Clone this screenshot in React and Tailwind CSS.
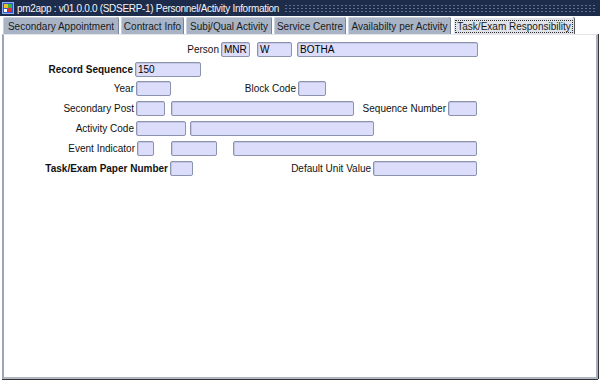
import React from "react";

const font = { fontFamily: '"Liberation Sans", Arial, sans-serif' };

function Field({ w, value, className = "" }) {
  return (
    <div
      className={`h-[15px] shrink-0 rounded-[2px] border border-[#8b93ad] bg-[#dcdcfb] pl-[2px] text-[10px] leading-[13px] text-black shadow-[inset_1px_1px_0_#c4c6e4] ${className}`}
      style={{ width: w }}
    >
      {value}
    </div>
  );
}

function Label({ w, children, bold }) {
  return (
    <div
      className={`shrink-0 pr-[2px] text-right text-[10px] leading-[15px] text-[#111] ${bold ? "font-bold" : ""}`}
      style={{ width: w }}
    >
      {children}
    </div>
  );
}

const tabs = [
  { label: "Secondary Appointment", w: 115 },
  { label: "Contract Info", w: 62 },
  { label: "Subj/Qual Activity", w: 85 },
  { label: "Service Centre", w: 71 },
  { label: "Availabilty per Activity", w: 102 },
  { label: "Task/Exam Responsibility", w: 121, active: true },
];

function AppIcon() {
  return (
    <svg width="12" height="12" viewBox="0 0 12 12" className="shrink-0">
      <rect x="0.5" y="0.5" width="11" height="11" fill="#2a5bc8" stroke="#8fb0f0" />
      <rect x="2" y="2" width="4" height="4" fill="#f0c020" />
      <rect x="6" y="6" width="4" height="4" fill="#e03030" />
      <rect x="6" y="2" width="4" height="4" fill="#40b040" />
      <path d="M2 7h3v3H2z" fill="#ffffff" />
    </svg>
  );
}

export default function App() {
  return (
    <div className="flex h-[380px] w-[600px] flex-col overflow-hidden bg-white" style={font}>
      {/* title bar */}
      <div className="flex h-[16px] items-center bg-[#1d2c4b] pl-[2px] pr-[4px]">
        <AppIcon />
        <span className="ml-[3px] whitespace-nowrap text-[10px] leading-[15px] tracking-[-0.3px] text-[#f2f4f8]">
          pm2app : v01.0.0.0 (SDSERP-1) Personnel/Activity Information
        </span>
        <div className="ml-[5px] h-[9px] flex-1 bg-[radial-gradient(circle,#5f7090_0.6px,transparent_0.8px)] bg-[length:4px_3px]" />
      </div>

      {/* tabs */}
      <div className="flex h-[18px] items-end gap-[3px] pl-[3px] pt-[1px]">
        {tabs.map((t) => (
          <div
            key={t.label}
            className={`flex h-[17px] shrink-0 items-center justify-center whitespace-nowrap rounded-t-[2px] border-l border-t text-[10px] text-[#1a1a1a] ${
              t.active
                ? "border-white bg-[#dfe2e8] shadow-[1px_0_0_#555]"
                : "border-[#c8d0dc] bg-[#a8b4c6] shadow-[1px_0_0_#7a8598]"
            }`}
            style={{ width: t.w }}
          >
            <span className={t.active ? "border border-dotted border-[#333] px-[1px] leading-[11px]" : ""}>
              {t.label}
            </span>
          </div>
        ))}
      </div>

      {/* panel */}
      <div className="mb-[1px] ml-[2px] mr-[2px] flex-1 border-b-2 border-l-2 border-r-2 border-t border-b-[#b0b8c2] border-l-[#9aa3b8] border-r-[#a9b0bc] border-t-[#e4e6ea] pt-[7px] shadow-[0_1px_0_#333,1px_0_0_#333]">
        <div className="flex h-[15px] items-center">
          <Label w={217}>Person</Label>
          <Field w={29} value="MNR" />
          <Field w={35} value="W" className="ml-[7px]" />
          <Field w={181} value="BOTHA" className="ml-[5px]" />
        </div>

        <div className="mt-[5px] flex h-[15px] items-center">
          <Label w={131} bold>Record Sequence</Label>
          <Field w={66} value="150" />
        </div>

        <div className="mt-[4px] flex h-[15px] items-center">
          <Label w={132}>Year</Label>
          <Field w={35} />
          <Label w={127}>Block Code</Label>
          <Field w={28} />
        </div>

        <div className="mt-[5px] flex h-[15px] items-center">
          <Label w={132}>Secondary Post</Label>
          <Field w={29} />
          <Field w={183} className="ml-[6px]" />
          <Label w={94}>Sequence Number</Label>
          <Field w={29} />
        </div>

        <div className="mt-[5px] flex h-[15px] items-center">
          <Label w={132}>Activity Code</Label>
          <Field w={50} />
          <Field w={184} className="ml-[4px]" />
        </div>

        <div className="mt-[5px] flex h-[15px] items-center">
          <Label w={133}>Event Indicator</Label>
          <Field w={17} />
          <Field w={46} className="ml-[17px]" />
          <Field w={244} className="ml-[16px]" />
        </div>

        <div className="mt-[5px] flex h-[15px] items-center">
          <Label w={166} bold>Task/Exam Paper Number</Label>
          <Field w={23} />
          <Label w={180}>Default Unit Value</Label>
          <Field w={104} />
        </div>
      </div>
    </div>
  );
}
